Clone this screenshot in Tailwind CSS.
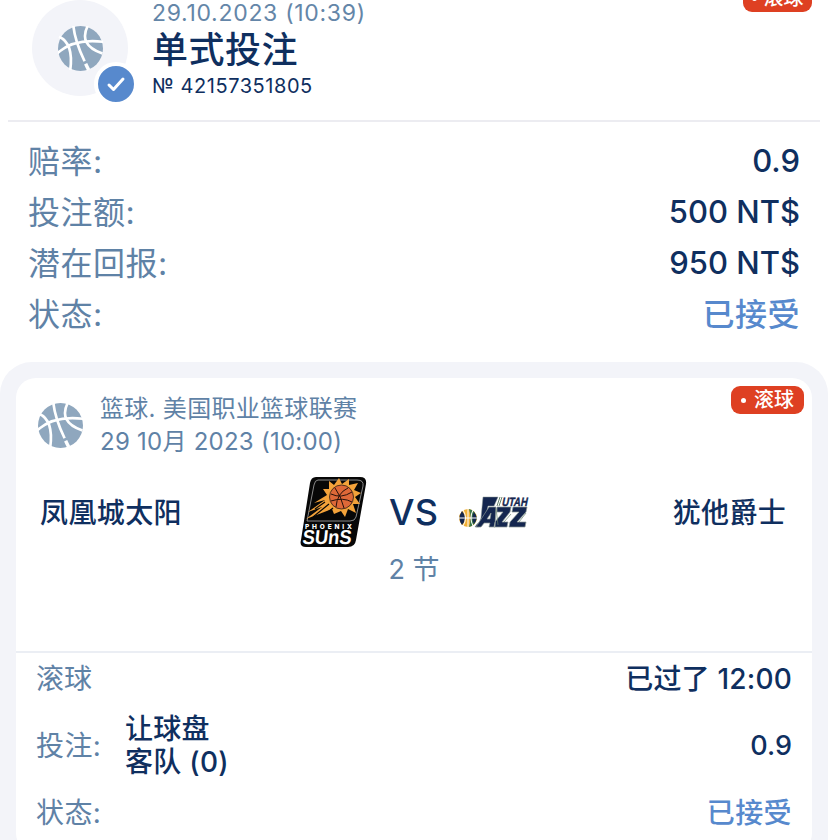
<!DOCTYPE html>
<html lang="zh-CN">
<head>
    <meta charset="UTF-8">
    <meta name="viewport" content="width=device-width, initial-scale=1.0">
    <title>单式投注</title>

    <!-- Tailwind CSS for styling -->
    <script src="https://cdn.jsdelivr.net/npm/@tailwindcss/browser@4"></script>
</head>
<body class="h-[840px] overflow-hidden bg-white font-['Inter','Noto_Sans_CJK_SC',sans-serif] text-[#0f2f5f]">

    <!-- Shared basketball icon -->
    <svg class="hidden">
        <symbol id="ball" viewBox="0 0 44 44">
            <circle cx="22" cy="22" r="22" fill="#8fa7be"/>
            <g fill="none" stroke="#fff" stroke-width="2.6">
                <path d="M1 10.500C9 14 14.500 24 12 43"/>
                <path d="M-1 27C10 16.500 25 13 45 15.500"/>
                <path d="M15 0C16.500 13 20 22 26 34.500"/>
                <path d="M27 37L30 43" stroke-width="3.4"/>
                <path d="M29 0C23 12 27 21 43.500 27"/>
            </g>
        </symbol>
    </svg>

    <!-- Bet header -->
    <header class="relative mx-2 flex h-[122px] border-b-2 border-[#ececf1] pl-6">
        <div class="relative flex h-24 w-24 items-center justify-center rounded-full bg-[#f3f4f9]">
            <svg class="h-[45px] w-[45px]"><use href="#ball"/></svg>
            <div class="absolute top-[62px] left-[62px] flex h-11 w-11 items-center justify-center rounded-full border-4 border-white bg-[#5789cd]">
                <svg class="h-5 w-5" viewBox="0 0 20 20" fill="none" stroke="#fff" stroke-width="3" stroke-linecap="round" stroke-linejoin="round"><path d="M3 11L7.500 15.500L17 5"/></svg>
            </div>
        </div>
        <div class="ml-6 whitespace-nowrap">
            <p class="h-[26px] text-[23px] leading-[26px] tracking-[0.7px] text-[#6486a8]">29.10.2023 (10:39)</p>
            <h1 class="h-[46px] text-[36px] leading-[48px] font-medium tracking-[0.5px]">单式投注</h1>
            <p class="h-7 text-[20px] leading-[29px] tracking-[0.55px]">№ 42157351805</p>
        </div>
        <div class="absolute -top-4 right-2 flex h-7 w-[69px] items-center justify-center gap-[7px] rounded-[9px] bg-[#de4022] text-[20px] font-medium text-white">
            <span class="h-[5px] w-[5px] rounded-full bg-white"></span>滚球
        </div>
    </header>

    <!-- Bet summary -->
    <dl class="flex h-[240px] flex-col pt-[14px] pr-7 pl-7 text-[32px] leading-[51px]">
        <div class="flex justify-between"><dt class="tracking-[0.5px] text-[#5f82a6]">赔率:</dt><dd class="text-[31px] leading-[50px] font-medium">0.9</dd></div>
        <div class="flex justify-between"><dt class="tracking-[0.5px] text-[#5f82a6]">投注额:</dt><dd class="text-[31px] leading-[50px] font-medium">500 NT$</dd></div>
        <div class="flex justify-between"><dt class="tracking-[0.5px] text-[#5f82a6]">潜在回报:</dt><dd class="text-[31px] leading-[50px] font-medium">950 NT$</dd></div>
        <div class="flex justify-between"><dt class="tracking-[0.5px] text-[#5f82a6]">状态:</dt><dd class="font-medium tracking-[0.5px] text-[#5789cd]">已接受</dd></div>
    </dl>

    <!-- Event card -->
    <main class="h-[500px] rounded-t-[32px] bg-[#f3f4f9] px-4 pt-4">
        <section class="h-[475px] rounded-[20px] bg-white">

            <!-- League -->
            <div class="flex h-[84px] justify-between pt-2 pr-2 pl-[22px]">
                <div class="flex">
                    <svg class="mt-[17px] h-[45px] w-[45px]"><use href="#ball"/></svg>
                    <div class="ml-[17px] pt-[6px] text-[24px] leading-[33px] whitespace-nowrap text-[#5f82a6]">
                        <p class="tracking-[0.3px]">篮球. 美国职业篮球联赛</p>
                        <p class="tracking-[0.25px]">29 10月 2023 (10:00)</p>
                    </div>
                </div>
                <div class="flex h-7 w-[73px] items-center justify-center gap-2 rounded-[9px] bg-[#de4022] text-[20px] font-medium text-white">
                    <span class="h-[5px] w-[5px] rounded-full bg-white"></span>滚球
                </div>
            </div>

            <!-- Teams -->
            <div class="flex h-[191px] items-start justify-between border-b-2 border-[#ebeef4] pr-[26px] pl-6 text-[28px]">
                <p class="mt-[31px] w-[200px] leading-[40px] font-medium tracking-[0.4px]">凤凰城太阳</p>
                <div class="text-center">
                    <div class="mt-[13px] flex h-[74px] items-center pl-[3px]">
                        <!-- Phoenix Suns -->
                        <svg class="h-[74px] w-[72px]" viewBox="0 0 72 74">
                            <path d="M18 2H62Q69 2 68 9L58 65Q57 72 50 72H8Q1 72 3 65L12 8Q13 2 18 2Z" fill="#070707"/>
                            <path d="M20 5H59Q66 5 65 11L58 42Q57 46 52 46H9L16 10Q17 5 20 5Z" fill="none" stroke="#aaa" stroke-width=".8"/>
                            <path d="M31 6L36 10L41 3L44 9L51 4L51 10L60 8L56 15L63 18L57 22L62 29L55 29L58 38L50 34L47 42L43 36L36 39L34 34L8 44L24 32L10 37L27 25L16 28L29 20L25 14L31 14Z" fill="#f3a23a"/>
                            <path d="M31 29L15 42M27 27L17 34M35 33L26 40" stroke="#070707" stroke-width="1.200"/>
                            <circle cx="43.500" cy="22" r="12" fill="#de6838" stroke="#111" stroke-width=".7"/>
                            <path d="M33 19Q43 24 54 17M38 32Q39 18 50 13M33 26Q45 22 54 27M46 33Q43 21 37 13" fill="none" stroke="#26100a" stroke-width="1"/>
                            <text x="7" y="53.500" font-family="Inter" font-size="6.500" font-weight="800" fill="#fff" textLength="47" lengthAdjust="spacing">PHOENIX</text>
                            <text transform="translate(4 69) skewX(-6)" font-family="Liberation Sans" font-size="20" font-weight="700" fill="#fff" textLength="49" lengthAdjust="spacingAndGlyphs">SUnS</text>
                        </svg>
                        <span class="mr-[20px] ml-[18px] w-[51px] text-[36px] leading-[74px] font-medium">VS</span>
                        <!-- Utah Jazz -->
                        <svg class="mt-[2px] h-[34px] w-[74px] overflow-visible" viewBox="0 0 74 34">
                            <path d="M24 1H39L35 10H29L26 24Q24 32 16 31L18 28Q21 27 22 22Z" fill="#14264f" stroke="#8d9995" stroke-width=".5"/>
                            <path d="M41 1L38 10M43 1L40 10" stroke="#66816c" stroke-width="1"/>
                            <text transform="translate(42.500 9.500) skewX(-12)" font-family="Liberation Sans" font-size="12" font-weight="700" fill="#14264f" stroke="#14264f" stroke-width=".4" textLength="25.500" lengthAdjust="spacingAndGlyphs">UTAH</text>
                            <path d="M17 31L30 11H37L36 31H30L31 27H25L22 31ZM28 23H31L32 17ZM38 11H52L51 16L43 26H49L48 31H35L36 26L44 16H38ZM54 11H68L67 16L58 26H67L66 31H50L51 26L60 16H53Z" fill="#14264f" fill-rule="evenodd" stroke="#8d9995" stroke-width=".7"/>
                            <path d="M37 12L39 29M52 18L45 26M67 17L60 26" stroke="#66816c" stroke-width=".7"/>
                            <circle cx="9" cy="22" r="9" fill="#f1af36"/>
                            <path d="M3 15Q9 22 3 29Q-2 22 3 15Z" fill="#14264f"/>
                            <path d="M10 13Q16 14 18 22Q16 30 10 31Q13 22 10 13Z" fill="#397547"/>
                            <path d="M15 16Q20 22 15 28Q12 22 15 16Z" fill="#14264f"/>
                            <path d="M0 22H18M9 13V31M4 14Q9 22 4 30M14 14Q10 22 14 30" fill="none" stroke="#fff" stroke-width="1"/>
                        </svg>
                    </div>
                    <p class="mt-1 text-[27px] leading-[34px] text-[#5f82a6]">2 节</p>
                </div>
                <p class="mt-[31px] w-[198px] text-right leading-[40px] font-medium tracking-[0.3px]">犹他爵士</p>
            </div>

            <!-- Selection -->
            <div class="flex h-[51px] items-center justify-between pr-5 pl-5 text-[28px]">
                <span class="text-[#5f82a6]">滚球</span>
                <span class="font-medium tracking-[0.2px]">已过了 12:00</span>
            </div>
            <div class="flex h-[84px] items-center pr-5 pl-5 text-[28px]">
                <span class="w-[89px] tracking-[0.4px] text-[#5f82a6]">投注:</span>
                <p class="leading-[33px] font-medium tracking-[0.3px]">让球盘<br>客队 (0)</p>
                <span class="ml-auto text-[27px] font-medium">0.9</span>
            </div>
            <div class="flex h-[49px] items-center justify-between pr-5 pl-5 text-[28px]">
                <span class="tracking-[0.4px] text-[#5f82a6]">状态:</span>
                <span class="font-medium tracking-[0.4px] text-[#5789cd]">已接受</span>
            </div>
        </section>
    </main>

</body>
</html>
